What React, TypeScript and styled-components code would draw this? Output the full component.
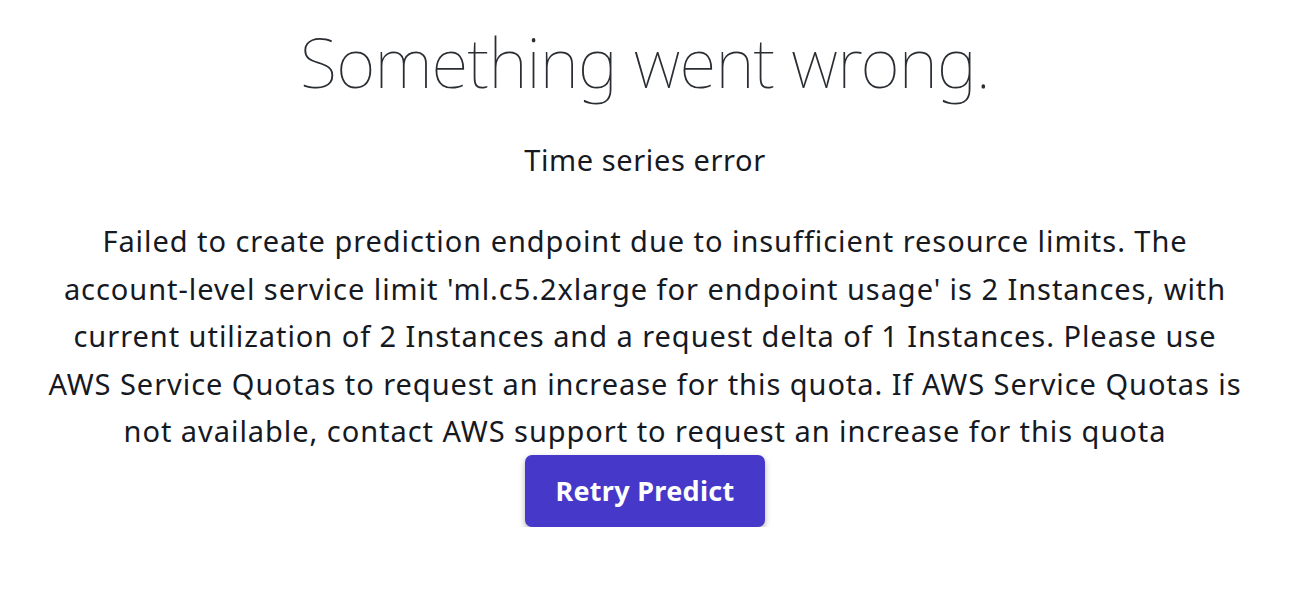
import React from "react";
import styled, { createGlobalStyle } from "styled-components";

const Global = createGlobalStyle`
  body {
    margin: 0;
    background: #ffffff;
    font-family: "Noto Sans", "Open Sans", sans-serif;
    color: #16191f;
  }
`;

const Page = styled.main`
  display: flex;
  flex-direction: column;
  align-items: center;
  padding: 17px 22px 0 0;
`;

const Title = styled.h1`
  margin: 0;
  font-family: "Noto Sans", sans-serif;
  font-weight: 100;
  font-size: 68px;
  letter-spacing: -0.8px;
  line-height: 90px;
  color: #2a2e33;
`;

const Subtitle = styled.h2`
  margin: 33px 0 0;
  font-weight: 400;
  font-size: 29px;
  letter-spacing: 0.6px;
  line-height: 40px;
`;

const Message = styled.p`
  margin: 37px 0 0;
  text-align: center;
  font-size: 29px;
  letter-spacing: 0.95px;
  line-height: 47.5px;
  white-space: nowrap;
`;

const RetryButton = styled.button`
  width: 240px;
  height: 72px;
  border: none;
  border-radius: 7px;
  background: #4638c8;
  color: #ffffff;
  font-family: "Noto Sans", sans-serif;
  font-weight: 700;
  font-size: 27px;
  letter-spacing: 0.3px;
  box-shadow: 0 3px 6px rgba(0, 0, 0, 0.3);
  cursor: pointer;
`;

const lines = [
  "Failed to create prediction endpoint due to insufficient resource limits. The",
  "account-level service limit 'ml.c5.2xlarge for endpoint usage' is 2 Instances, with",
  "current utilization of 2 Instances and a request delta of 1 Instances. Please use",
  "AWS Service Quotas to request an increase for this quota. If AWS Service Quotas is",
  "not available, contact AWS support to request an increase for this quota",
];

export default function App() {
  return (
    <>
      <Global />
      <Page>
        <Title>Something went wrong.</Title>
        <Subtitle>Time series error</Subtitle>
        <Message>
          {lines.map((l, i) => (
            <React.Fragment key={i}>
              {l}
              {i < lines.length - 1 && <br />}
            </React.Fragment>
          ))}
        </Message>
        <RetryButton>Retry Predict</RetryButton>
      </Page>
    </>
  );
}
